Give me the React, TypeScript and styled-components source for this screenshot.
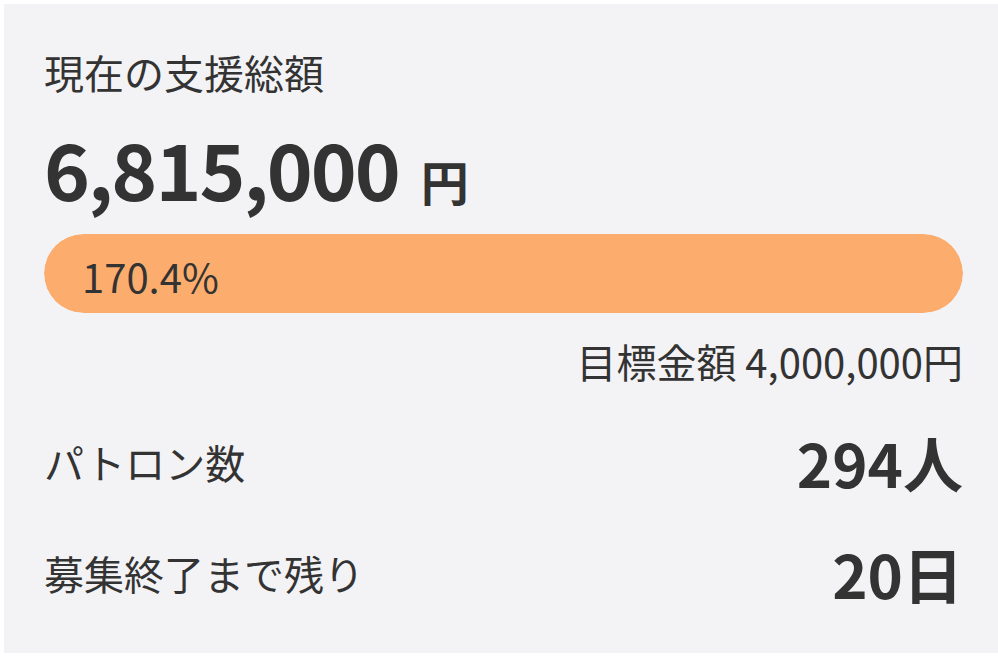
import styled, { createGlobalStyle } from "styled-components";

const GlobalStyle = createGlobalStyle`
  html, body {
    margin: 0;
    padding: 0;
    background: #ffffff;
  }
  body {
    font-family: "Noto Sans CJK JP", "Noto Sans", sans-serif;
    color: #333333;
  }
`;

export default function App() {
  const current = 6815000;
  const goal = 4000000;
  const rate = (current / goal) * 100;

  return (
    <>
      <GlobalStyle />
      <Panel>
        <Label>現在の支援総額</Label>
        <Total>
          {current.toLocaleString("en-US")}
          <Unit>円</Unit>
        </Total>
        <Bar>
          <Fill style={{ width: `${Math.min(rate, 100)}%` }}>
            <Percent>{rate.toFixed(1)}%</Percent>
          </Fill>
        </Bar>
        <Goal>目標金額 {goal.toLocaleString("en-US")}円</Goal>
        <StatRow>
          <Label>パトロン数</Label>
          <StatValue>294人</StatValue>
        </StatRow>
        <StatRow>
          <Label>募集終了まで残り</Label>
          <StatValue>20日</StatValue>
        </StatRow>
      </Panel>
    </>
  );
}

const Panel = styled.div`
  margin: 4px 0 4px 4px;
  padding: 48px 35px 50px 40px;
  background: #f3f3f6;
  display: flex;
  flex-direction: column;
`;

const Label = styled.div`
  font-size: 40px;
  line-height: 40px;
`;

const Total = styled.div`
  margin-top: 36px;
  font-size: 78px;
  font-weight: 700;
  line-height: 78px;
  letter-spacing: -2px;
  display: flex;
  align-items: baseline;
`;

const Unit = styled.span`
  font-size: 48px;
  line-height: 48px;
  letter-spacing: 0;
  margin-left: 22px;
`;

const Bar = styled.div`
  margin-top: 28px;
  height: 79px;
  border-radius: 40px;
  background: #f3f3f6;
  overflow: hidden;
`;

const Fill = styled.div`
  height: 100%;
  border-radius: 40px;
  background: #fcad6d;
  display: flex;
  align-items: center;
  padding-left: 38px;
  box-sizing: border-box;
`;

const Percent = styled.span`
  font-size: 40px;
  line-height: 40px;
  padding-top: 4px;
`;

const Goal = styled.div`
  margin-top: 28px;
  text-align: right;
  font-size: 40px;
  line-height: 40px;
`;

const StatRow = styled.div`
  margin-top: 51px;
  height: 60px;
  display: flex;
  justify-content: space-between;
  align-items: center;
`;

const StatValue = styled.div`
  font-size: 60px;
  font-weight: 700;
  line-height: 60px;
`;
